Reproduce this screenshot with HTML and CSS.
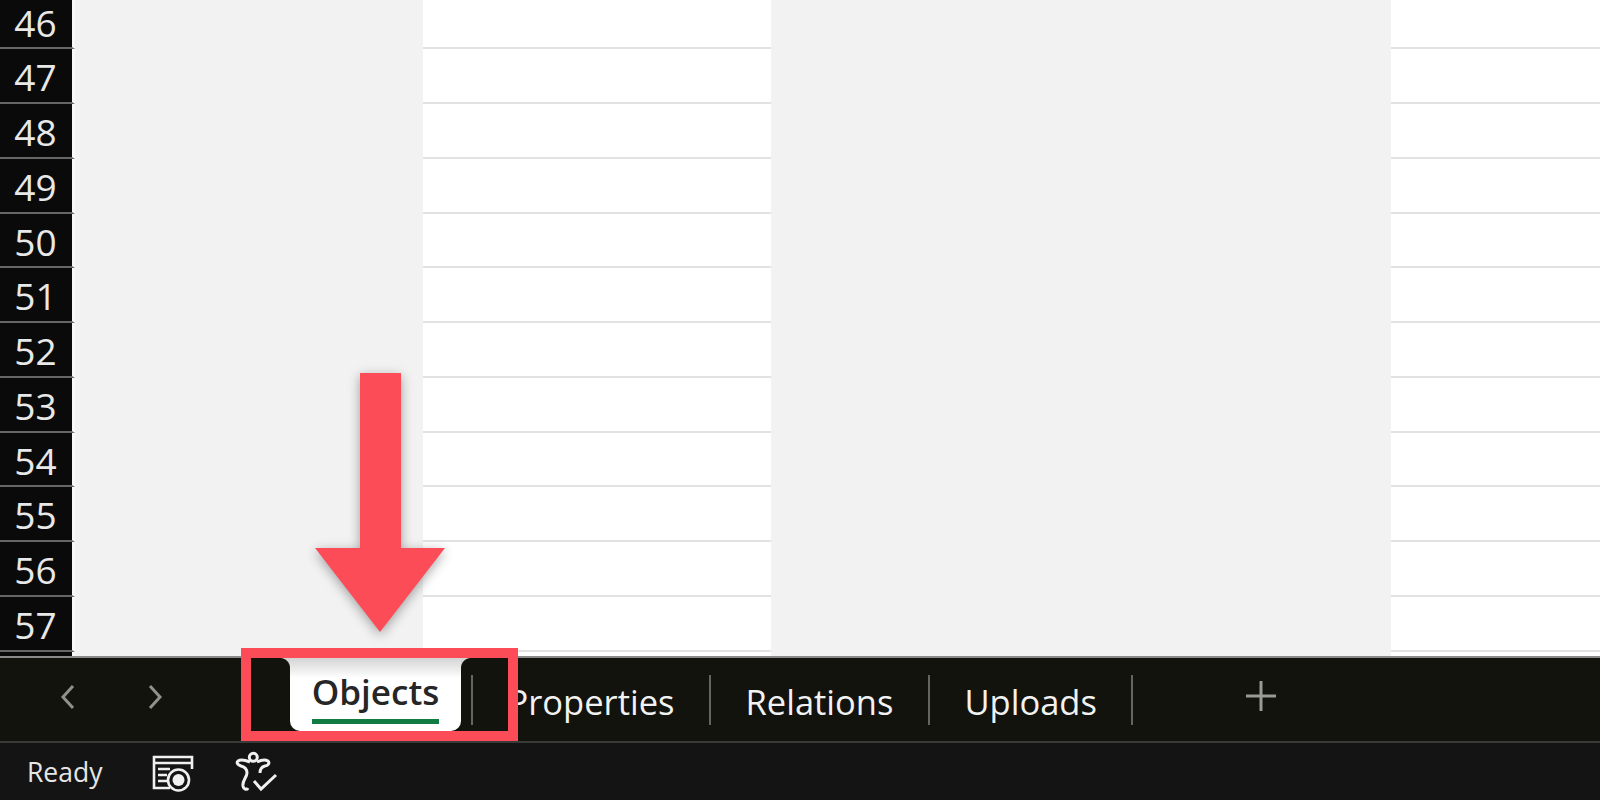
FILE: index.html
```html
<!DOCTYPE html>
<html lang="en">
<head>
    <meta charset="UTF-8">
    <meta name="viewport" content="width=device-width, initial-scale=1.0">
    <title>Objects</title>
    <link rel="stylesheet" href="styles.css">
</head>
<body>
    <div class="sheet">
        <div class="row first"><div class="num">46</div><div class="cell grey"></div><div class="cell"></div><div class="cell grey"></div><div class="cell"></div></div>
        <div class="row"><div class="num">47</div><div class="cell grey"></div><div class="cell"></div><div class="cell grey"></div><div class="cell"></div></div>
        <div class="row"><div class="num">48</div><div class="cell grey"></div><div class="cell"></div><div class="cell grey"></div><div class="cell"></div></div>
        <div class="row"><div class="num">49</div><div class="cell grey"></div><div class="cell"></div><div class="cell grey"></div><div class="cell"></div></div>
        <div class="row"><div class="num">50</div><div class="cell grey"></div><div class="cell"></div><div class="cell grey"></div><div class="cell"></div></div>
        <div class="row"><div class="num">51</div><div class="cell grey"></div><div class="cell"></div><div class="cell grey"></div><div class="cell"></div></div>
        <div class="row"><div class="num">52</div><div class="cell grey"></div><div class="cell"></div><div class="cell grey"></div><div class="cell"></div></div>
        <div class="row"><div class="num">53</div><div class="cell grey"></div><div class="cell"></div><div class="cell grey"></div><div class="cell"></div></div>
        <div class="row"><div class="num">54</div><div class="cell grey"></div><div class="cell"></div><div class="cell grey"></div><div class="cell"></div></div>
        <div class="row"><div class="num">55</div><div class="cell grey"></div><div class="cell"></div><div class="cell grey"></div><div class="cell"></div></div>
        <div class="row"><div class="num">56</div><div class="cell grey"></div><div class="cell"></div><div class="cell grey"></div><div class="cell"></div></div>
        <div class="row"><div class="num">57</div><div class="cell grey"></div><div class="cell"></div><div class="cell grey"></div><div class="cell"></div></div>
        <div class="row"><div class="num"></div><div class="cell grey"></div><div class="cell"></div><div class="cell grey"></div><div class="cell"></div></div>
    </div>

    <div class="tabbar">
        <div class="nav">
            <svg class="chev" width="20" height="30" viewBox="0 0 20 30"><path d="M15 4 5 15l10 11"/></svg>
            <svg class="chev" width="20" height="30" viewBox="0 0 20 30"><path d="m5 4 10 11L5 26"/></svg>
        </div>
        <div class="tab-active"><span class="tab-label">Objects</span></div>
        <div class="sep first-sep"></div>
        <div class="tab">Properties</div>
        <div class="sep"></div>
        <div class="tab">Relations</div>
        <div class="sep"></div>
        <div class="tab">Uploads</div>
        <div class="sep"></div>
        <svg class="plus" width="32" height="32" viewBox="0 0 32 32"><path d="M16 1v30M1 16h30"/></svg>
    </div>

    <div class="statusbar">
        <span class="ready">Ready</span>
        <svg class="status-icon" width="60" height="48" viewBox="0 0 60 48">
            <path d="M25 40H9V9h38v12M9 15h38M13 21h12M13 27h9M13 33h9"/>
            <circle cx="33.5" cy="32" r="10.5"/>
            <circle class="dot" cx="33.5" cy="32" r="6"/>
        </svg>
        <svg class="status-icon access" width="60" height="48" viewBox="0 0 60 48">
            <circle cx="28.3" cy="9.3" r="4"/>
            <path d="M25 14C20 12 16 11 13 13c-2 2 0 4 3 5 4 1 6 3 6 7 0 4-5 8-4 13 1 4 4 4 5 2M32 14c4-2 8-3 11-1 2 2 0 5-3 5-4 1-5 3-5 7M29 33l7 8 15-14"/>
        </svg>
    </div>

    <div class="callout"></div>
    <svg class="arrow" width="150" height="280" viewBox="0 0 150 280">
        <path d="M55 10h41v175h44l-65 84-65-84h45z"/>
    </svg>
</body>
</html>
```

FILE: styles.css
```css
* { box-sizing: border-box; }

body {
    margin: 0;
    width: 1600px;
    height: 800px;
    overflow: hidden;
    position: relative;
    background-color: #fff;
    font-family: "Open Sans", "Noto Sans", sans-serif;
}

.sheet {
    height: 656px;
    overflow: hidden;
}

.row {
    display: grid;
    grid-template-columns: 75px 348px 348px 620px 209px;
    grid-template-rows: 54.75px;
    height: 54.75px;
}

/* the top row is scrolled partly out of view */
.row.first {
    grid-template-rows: 49.25px;
    height: 49.25px;
}

.num {
    background-color: #0a0a0a;
    border-right: 3px solid #f8f8f8;
    border-bottom: 2px solid #666;
    color: #e8e8e8;
    font-size: 37px;
    line-height: 50px;
    text-align: center;
    padding: 3px 1px 0 0;
}

.row.first .num {
    line-height: 45px;
    padding-top: 0;
}

.cell {
    background-color: #fff;
    border-bottom: 2px solid #e2e2e2;
}

.cell.grey {
    background-color: #f2f2f2;
    border-bottom: none;
}

.tabbar {
    height: 87px;
    display: flex;
    align-items: center;
    background-color: #12130c;
    border-top: 2px solid #8a8a8a;
    border-bottom: 2px solid #3a3a3a;
    color: #f2f2f2;
    font-size: 34.5px;
}

.nav {
    width: 290px;
    height: 100%;
    display: flex;
    align-items: center;
    gap: 67px;
    padding: 0 0 6px 58px;
}

.chev {
    fill: none;
    stroke: #8f918a;
    stroke-width: 3;
}

.tab-active {
    position: relative;
    width: 171px;
    height: 73px;
    align-self: flex-start;
    display: flex;
    justify-content: center;
    background: linear-gradient(#d4d4d4, #fff 20px);
    border-radius: 0 0 10px 10px;
}

/* the shoulders where the active tab flares into the bar */
.tab-active::before,
.tab-active::after {
    content: "";
    position: absolute;
    top: 0;
    width: 10px;
    height: 10px;
}

.tab-active::before {
    left: -10px;
    background: radial-gradient(circle at 0 100%, #12130c 9.5px, #d4d4d4 10.5px);
}

.tab-active::after {
    right: -10px;
    background: radial-gradient(circle at 100% 100%, #12130c 9.5px, #d4d4d4 10.5px);
}

.tab-label {
    height: 66px;
    line-height: 67px;
    color: #262626;
    font-size: 35px;
    font-weight: 600;
    border-bottom: 5px solid #107c41;
}

.sep {
    width: 2px;
    height: 50px;
    background-color: #64655f;
    margin: 0 34.5px;
}

.first-sep {
    margin-left: 10px;
}

.tab {
    line-height: 56px;
    padding-top: 4px;
}

.plus {
    margin-left: 77px;
    margin-top: -8px;
    fill: none;
    stroke: #9a9a96;
    stroke-width: 3;
}

.statusbar {
    height: 57px;
    display: flex;
    align-items: center;
    background-color: #141414;
    color: #e6e6e6;
    padding-left: 27px;
    font-size: 26.5px;
}

.ready {
    width: 118px;
}

.status-icon {
    fill: none;
    stroke: #f0f0f0;
    stroke-width: 2.6;
}

.status-icon .dot {
    fill: #f0f0f0;
    stroke: none;
}

.access {
    margin-left: 20px;
    stroke-width: 3;
}

.callout {
    position: absolute;
    left: 241px;
    top: 648px;
    width: 277px;
    height: 93px;
    border: 10px solid #fc4c58;
}

.arrow {
    position: absolute;
    left: 305px;
    top: 363px;
    fill: #fc4c58;
    filter: drop-shadow(0 3px 6px rgba(0, 0, 0, 0.35));
}
```
